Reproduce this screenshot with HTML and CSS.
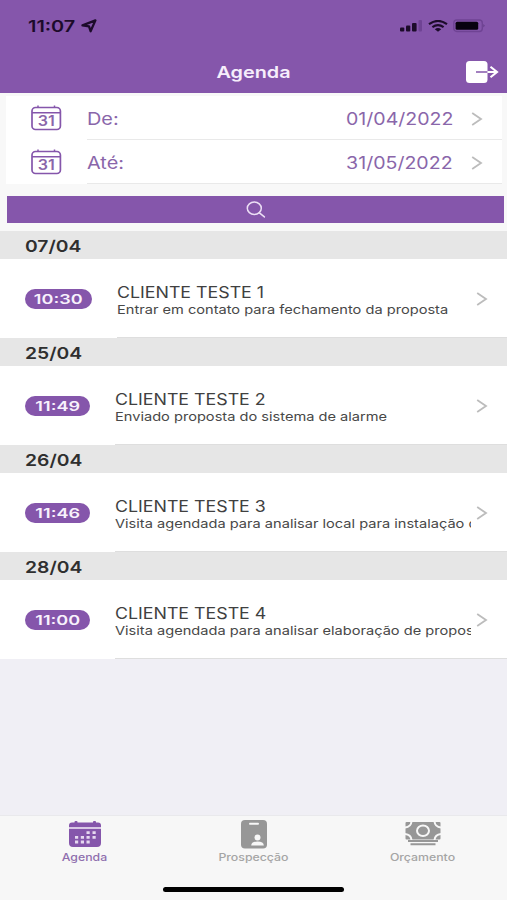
FILE: index.html
```html
<!DOCTYPE html>
<html lang="pt-BR">
<head>
  <meta charset="UTF-8" />
  <meta name="viewport" content="width=device-width, initial-scale=1.0" />
  <title>Agenda</title>
  <link rel="stylesheet" href="styles.css">
</head>
<body>
  <div class="app">
    <header>
      <div class="status-bar">
        <div class="clock">
          <span class="wide time">11:07</span>
          <svg class="location" width="16" height="14" viewBox="0 0 16 14"><path d="M1.5 6.3L14.4 1.4L9.6 12.2L8 7.4Z" fill="none" stroke="#1c0b2a" stroke-width="2.3" stroke-linejoin="round"/></svg>
        </div>
        <div class="indicators">
          <svg width="23" height="12" viewBox="0 0 23 12"><g fill="#1c0b2a"><rect x="0" y="7.5" width="4.3" height="4" rx="1"/><rect x="6" y="5.5" width="4.3" height="6" rx="1"/><rect x="12" y="3" width="4.6" height="8.5" rx="1"/></g><rect x="18.5" y="0" width="3.5" height="11.5" rx="1" fill="#6f4394"/></svg>
          <svg width="20" height="12" viewBox="0 0 20 12"><g fill="none" stroke="#1c0b2a" stroke-width="2.1"><path d="M1 4.2Q10-2.4 19 4.2"/><path d="M4.4 7.2Q10 3 15.6 7.2"/></g><path d="M6.8 9.2Q10 7 13.2 9.2L10 11.8Z" fill="#1c0b2a"/></svg>
          <svg width="33" height="14" viewBox="0 0 33 14"><rect x=".8" y="1" width="28.5" height="11.5" rx="3" fill="none" stroke="#6f4394" stroke-width="1.4"/><rect x="2.6" y="2.8" width="22.6" height="8" rx="1.5" fill="#08020f"/><path d="M30.6 5v3.6q1.8-1.8 0-3.6" fill="#4f2d70"/></svg>
        </div>
      </div>
      <div class="title-bar">
        <h1 class="wide">Agenda</h1>
        <svg class="logout" width="33" height="24" viewBox="0 0 33 24"><rect x="0" y="1" width="21.5" height="22" rx="3.5" fill="#fff"/><path d="M10 12h11.5" stroke="#8556ab" stroke-width="1.5"/><path d="M21.5 12h9.5M24.5 6.8L31 12l-6.5 5.2" fill="none" stroke="#fff" stroke-width="2.1"/></svg>
      </div>
    </header>

    <!-- Date filter -->
    <div class="filter-area">
      <section class="filter">
        <div class="filter-row">
          <svg class="calendar" width="31" height="26" viewBox="0 0 31 26"><g fill="none" stroke="#8556ab"><rect x="1" y="2.5" width="28.4" height="22" rx="3.5" stroke-width="1.7"/><path d="M1 7.8h28.4M7 .5v2M23.5 .5v2" stroke-width="1.5"/></g><text x="15.3" y="21.3" textLength="17" lengthAdjust="spacingAndGlyphs">31</text></svg>
          <div class="filter-content">
            <span class="wide label">De:</span>
            <span class="wide date">01/04/2022</span>
            <svg class="chevron" width="12" height="16" viewBox="0 0 12 16"><path d="M1.2 2L10 8l-8.8 6"/></svg>
          </div>
        </div>
        <div class="filter-row">
          <svg class="calendar" width="31" height="26" viewBox="0 0 31 26"><g fill="none" stroke="#8556ab"><rect x="1" y="2.5" width="28.4" height="22" rx="3.5" stroke-width="1.7"/><path d="M1 7.8h28.4M7 .5v2M23.5 .5v2" stroke-width="1.5"/></g><text x="15.3" y="21.3" textLength="17" lengthAdjust="spacingAndGlyphs">31</text></svg>
          <div class="filter-content">
            <span class="wide label">Até:</span>
            <span class="wide date">31/05/2022</span>
            <svg class="chevron" width="12" height="16" viewBox="0 0 12 16"><path d="M1.2 2L10 8l-8.8 6"/></svg>
          </div>
        </div>
      </section>
      <button class="search" type="button" aria-label="Buscar">
        <svg width="20" height="17" viewBox="0 0 20 17"><g fill="none" stroke="#ecdff5" stroke-width="1.5" stroke-linecap="round"><ellipse cx="8.3" cy="7.3" rx="7" ry="6.2"/><path d="M13.4 11.8L18.400 15.900"/></g></svg>
      </button>
    </div>

    <!-- Appointments -->
    <main>
      <h2><span class="wide">07/04</span></h2>
      <div class="visit first">
        <span class="badge"><span class="wide">10:30</span></span>
        <div class="visit-content">
          <div class="visit-text">
            <p class="client wide">CLIENTE TESTE 1</p>
            <p class="note wide">Entrar em contato para fechamento da proposta</p>
          </div>
          <svg class="chevron" width="12" height="16" viewBox="0 0 12 16"><path d="M1.2 2L10 8l-8.8 6"/></svg>
        </div>
      </div>
      <h2><span class="wide">25/04</span></h2>
      <div class="visit">
        <span class="badge"><span class="wide">11:49</span></span>
        <div class="visit-content">
          <div class="visit-text">
            <p class="client wide">CLIENTE TESTE 2</p>
            <p class="note wide">Enviado proposta do sistema de alarme</p>
          </div>
          <svg class="chevron" width="12" height="16" viewBox="0 0 12 16"><path d="M1.2 2L10 8l-8.8 6"/></svg>
        </div>
      </div>
      <h2><span class="wide">26/04</span></h2>
      <div class="visit">
        <span class="badge"><span class="wide">11:46</span></span>
        <div class="visit-content">
          <div class="visit-text">
            <p class="client wide">CLIENTE TESTE 3</p>
            <p class="note wide">Visita agendada para analisar local para instalação d</p>
          </div>
          <svg class="chevron" width="12" height="16" viewBox="0 0 12 16"><path d="M1.2 2L10 8l-8.8 6"/></svg>
        </div>
      </div>
      <h2><span class="wide">28/04</span></h2>
      <div class="visit">
        <span class="badge"><span class="wide">11:00</span></span>
        <div class="visit-content">
          <div class="visit-text">
            <p class="client wide">CLIENTE TESTE 4</p>
            <p class="note wide">Visita agendada para analisar elaboração de propos</p>
          </div>
          <svg class="chevron" width="12" height="16" viewBox="0 0 12 16"><path d="M1.2 2L10 8l-8.8 6"/></svg>
        </div>
      </div>
    </main>

    <nav>
      <a class="tab active">
        <svg width="34" height="30" viewBox="0 0 34 30"><g fill="#8556ab"><path d="M4 2.500h26q3 0 3 3v1.700H1V5.500q0-3 3-3zM1 9h32v14q0 4-4 4H5q-4 0-4-4z"/><rect x="6.500" y="1" width="3" height="4" rx="1"/><rect x="25" y="1" width="3" height="4" rx="1"/></g><path d="M1 8.100h32" stroke="#d9c8e6" stroke-width="1.800"/><path d="M18.500 12.700h3.200M24.500 12.700h3.200M7 17.300h3.200M12.800 17.300h3.200M18.500 17.300h3.200M24.500 17.300h3.200M7 22h3.200M12.800 22h3.200M18.500 22h3.200" stroke="#e6d9f0" stroke-width="2.800"/></svg>
        <span class="wide">Agenda</span>
      </a>
      <a class="tab">
        <svg width="28" height="30" viewBox="0 0 28 30"><rect x="1" y="0" width="26" height="28.500" rx="4" fill="#979797"/><g fill="#f7f7f7"><rect x="9" y="2.800" width="10" height="1.900" rx=".9"/><circle cx="17.500" cy="17.500" r="3"/><path d="M11.200 25.500q0-4 6.300-4t6.300 4z"/></g></svg>
        <span class="wide">Prospecção</span>
      </a>
      <a class="tab">
        <svg width="36" height="30" viewBox="0 0 36 30"><rect x=".5" y="2" width="35" height="17.500" rx="1" fill="#979797"/><g fill="none" stroke="#f7f7f7" stroke-width="2"><ellipse cx="18" cy="10.800" rx="6" ry="5.300"/><path d="M0 7.500q6-.5 6.500-6M36 7.500q-6-.5-6.500-6M0 14q6 .5 6.500 6M36 14q-6 .5-6.500 6"/></g><path d="M3 21h30M5.500 24.200h25" stroke="#979797" stroke-width="2"/></svg>
        <span class="wide">Orçamento</span>
      </a>
      <div class="home-indicator"></div>
    </nav>
  </div>
</body>
</html>
```

FILE: styles.css
```css
* {
  box-sizing: border-box;
}

body {
  margin: 0;
  font-family: Inter, "Liberation Sans", sans-serif;
  background-color: #f0eff5;
}

h1,
h2,
p {
  margin: 0;
}

svg {
  display: block;
  flex-shrink: 0;
}

.app {
  height: 900px;
  display: flex;
  flex-direction: column;
  overflow: hidden;
}

/* extended-width lettering */
.wide {
  display: inline-block;
  transform: scaleX(1.2);
  transform-origin: left center;
  white-space: nowrap;
}

header {
  height: 93px;
  background-color: #8556ab;
}

.status-bar {
  height: 50px;
  padding: 2px 21px 0 28px;
  display: flex;
  justify-content: space-between;
  align-items: center;
}

.clock,
.indicators {
  display: flex;
  align-items: center;
}

.indicators {
  gap: 5px;
}

.time {
  width: 53px;
  font-size: 16px;
  font-weight: 600;
  color: #1c0b2a;
  transform: scaleX(1.24);
}

.title-bar {
  height: 43px;
  padding: 0 8px 0 41px;
  display: flex;
  align-items: center;
  justify-content: space-between;
}

.title-bar h1 {
  flex: 1;
  text-align: center;
  font-size: 16.5px;
  font-weight: 600;
  color: #f6eefb;
  transform-origin: center;
}

.filter-area {
  padding: 3px 3px 8px 6px;
  background-color: #f8f8f8;
}

.filter {
  margin-right: 2px;
  background-color: #ffffff;
}

.filter-row {
  height: 44px;
  padding-left: 25px;
  display: flex;
  align-items: center;
}

.calendar text {
  font-size: 14.5px;
  font-weight: 600;
  fill: #8a66aa;
  text-anchor: middle;
}

.filter-content {
  height: 100%;
  margin-left: 25px;
  padding: 2px 19px 0 0;
  flex: 1;
  display: flex;
  align-items: center;
  border-bottom: 1px solid #e9e9e9;
}

.label,
.date {
  font-size: 17px;
  color: #8a66aa;
}

.label {
  transform: scaleX(1.17);
}

.date {
  margin-left: auto;
  margin-right: 18px;
  transform: scaleX(1.15);
  transform-origin: right center;
}

.chevron {
  fill: none;
  stroke: #bcbcbc;
  stroke-width: 1.8;
}

.search {
  width: 497px;
  height: 27px;
  margin: 12px 0 0 1px;
  padding: 0;
  border: none;
  background-color: #8556ab;
  display: flex;
  align-items: center;
  justify-content: center;
}

.filter-area,
main,
nav {
  flex-shrink: 0;
}

main h2 {
  height: 28px;
  padding: 1px 0 0 25px;
  background-color: #e6e6e6;
  color: #2f2f2f;
  font-size: 16.5px;
  font-weight: 600;
  line-height: 28px;
}

main h2 .wide {
  transform: scaleX(1.17);
}

.visit {
  height: 79px;
  padding-left: 25px;
  display: flex;
  align-items: center;
  background-color: #ffffff;
}

.badge {
  width: 65px;
  height: 20px;
  margin: 1px 25px 0 0;
  display: flex;
  align-items: center;
  justify-content: center;
  border-radius: 10px;
  background-color: #8556ab;
  color: #f8f1fc;
  font-size: 13.5px;
  font-weight: 600;
}

.first .badge {
  width: 67px;
}

.badge .wide {
  transform: scaleX(1.34);
  transform-origin: center;
}

.visit-content {
  height: 100%;
  min-width: 0;
  flex: 1;
  padding: 2px 19px 0 0;
  display: flex;
  align-items: center;
  justify-content: space-between;
  border-bottom: 1px solid #dedede;
}

.visit-text {
  width: 356px;
  padding-top: 3px;
  overflow: hidden;
}

.visit-text p {
  display: block;
}

.client {
  font-size: 15.5px;
  line-height: 18px;
  color: #404040;
  transform: scaleX(1.147);
}

.note {
  font-size: 11.7px;
  line-height: 16px;
  color: #484848;
  transform: scaleX(1.25);
}

nav {
  height: 85px;
  margin-top: auto;
  padding-top: 4px;
  position: relative;
  display: grid;
  grid-template-columns: repeat(3, 1fr);
  align-items: start;
  border-top: 1px solid #e9e9ec;
  background-color: #f7f7f7;
}

.tab {
  display: flex;
  flex-direction: column;
  align-items: center;
  color: #a5a5a5;
  font-size: 10px;
  font-weight: 500;
  line-height: 14px;
}

.tab.active {
  color: #8f6fae;
}

.tab .wide {
  transform: scaleX(1.23);
  transform-origin: center;
}

/* sits over the tab bar */
.home-indicator {
  position: absolute;
  left: 163px;
  bottom: 8px;
  width: 181px;
  height: 5px;
  border-radius: 3px;
  background-color: #000000;
}
```
